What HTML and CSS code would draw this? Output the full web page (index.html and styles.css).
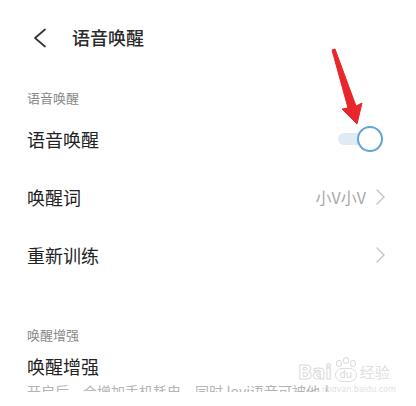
FILE: index.html
```html
<!DOCTYPE html>
<html lang="zh-CN">
<head>
<meta charset="utf-8">
<title>语音唤醒</title>
<link rel="stylesheet" href="styles.css">
</head>
<body>
<div class="screen">
  <header class="topbar">
    <svg class="back" width="14" height="20" viewBox="0 0 14 20"><path d="M12 1.5 L2 10 L12 18.5" fill="none" stroke="#333" stroke-width="1.7" stroke-linecap="round" stroke-linejoin="round"/></svg>
    <h1 class="title">语音唤醒</h1>
  </header>

  <div class="group-label">语音唤醒</div>
  <div class="row">
    <span class="label">语音唤醒</span>
    <span class="switch"><span class="knob"></span></span>
  </div>
  <div class="row">
    <span class="label">唤醒词</span>
    <span class="value">小V小V</span>
    <svg class="more" width="9" height="16" viewBox="0 0 9 16"><path d="M1 1 L8 8 L1 15" fill="none" stroke="#c4c4c4" stroke-width="1.4" stroke-linecap="round" stroke-linejoin="round"/></svg>
  </div>
  <div class="row">
    <span class="label">重新训练</span>
    <svg class="more" width="9" height="16" viewBox="0 0 9 16"><path d="M1 1 L8 8 L1 15" fill="none" stroke="#c4c4c4" stroke-width="1.4" stroke-linecap="round" stroke-linejoin="round"/></svg>
  </div>

  <div class="group-label second">唤醒增强</div>
  <div class="row-block">
    <div class="label">唤醒增强</div>
    <div class="desc">开启后，会增加手机耗电，同时Jovi语音可被他人</div>
  </div>

  <!-- red pointer arrow drawn over the switch -->
  <svg class="pointer" width="40" height="82" viewBox="0 0 40 82">
    <path d="M6 4 L9 3 L30 60 L36 57 L31 78 L16 63 L22 62 Z" fill="#e8262c" stroke="#e8262c" stroke-width="1" stroke-linejoin="round"/>
  </svg>

  <div class="mark">
    <div class="mark-top">
      <span class="mark-bai">Bai</span>
      <span class="mark-paw"><span class="toe t1"></span><span class="toe t2"></span><span class="toe t3"></span><span class="pad">du</span></span>
      <span class="mark-jy">经验</span>
    </div>
    <div class="mark-url">jingyan.baidu.com</div>
  </div>
</div>
</body>
</html>
```

FILE: styles.css
```css
* { box-sizing: border-box; }

html, body {
  margin: 0;
  padding: 0;
  background: #fff;
}

body {
  font-family: "Noto Sans CJK SC", "Noto Sans", sans-serif;
  color: #222;
}

.screen {
  position: relative;
  width: 416px;
  height: 392px;
  overflow: hidden;
  background: #fff;
}

.topbar {
  height: 74px;
  display: flex;
  align-items: center;
  padding-left: 33px;
  gap: 25px;
}

.back { display: block; margin-top: 1px; }

.title {
  margin: 0;
  font-size: 18px;
  font-weight: 500;
  line-height: 24px;
  color: #2a2a2a;
}

.group-label {
  padding: 14px 27px 2px;
  font-size: 13px;
  line-height: 20px;
  color: #8a8a8a;
}

.group-label.second {
  padding-top: 41px;
  padding-bottom: 0;
}

.row {
  height: 58px;
  display: flex;
  align-items: center;
  padding: 0 31px 0 27px;
}

.label {
  font-size: 18px;
  line-height: 24px;
  color: #222;
  flex: 1;
}

.value {
  font-size: 16px;
  color: #a8a8a8;
  margin-right: 10px;
}

.more { display: block; }

.switch {
  position: relative;
  width: 44px;
  height: 12px;
  margin-right: 3px;
  border-radius: 6px;
  background: #dfeaf5;
}

.knob {
  position: absolute;
  right: -1px;
  top: -7px;
  width: 26px;
  height: 26px;
  border-radius: 50%;
  background: #fff;
  border: 2.5px solid #62a6d6;
}

.row-block {
  padding: 9px 27px 0;
}

.row-block .label { display: block; }

.desc {
  margin-top: 2px;
  font-size: 14px;
  line-height: 22px;
  color: #b4b4b4;
  white-space: nowrap;
}

.pointer {
  position: absolute;
  left: 326px;
  top: 46px;
}

.mark {
  position: absolute;
  left: 298px;
  top: 360px;
  color: #e4e4e4;
}

.mark-top {
  display: flex;
  align-items: flex-end;
  gap: 2px;
  height: 22px;
}

.mark-bai {
  font-family: "DejaVu Sans", sans-serif;
  font-size: 19px;
  font-weight: bold;
  line-height: 20px;
  color: transparent;
  -webkit-text-stroke: 1px #dcdcdc;
}

.mark-paw {
  position: relative;
  width: 24px;
  height: 22px;
}

.toe {
  position: absolute;
  width: 6px;
  height: 7px;
  border: 1px solid #dcdcdc;
  border-radius: 50%;
}

.t1 { left: 2px; top: 0; }
.t2 { left: 9px; top: -3px; }
.t3 { left: 16px; top: 0; }

.pad {
  position: absolute;
  left: 1px;
  bottom: 0;
  width: 22px;
  height: 14px;
  border: 1px solid #dcdcdc;
  border-radius: 7px;
  font-family: "DejaVu Sans", sans-serif;
  font-size: 10px;
  line-height: 12px;
  text-align: center;
  color: #d8d8d8;
}

.mark-jy {
  font-size: 15px;
  line-height: 20px;
  color: #e0e0e0;
}

.mark-url {
  margin: 3px 0 0 24px;
  font-family: "DejaVu Sans", sans-serif;
  font-size: 8px;
  line-height: 9px;
  color: #e2e2e2;
}
```
